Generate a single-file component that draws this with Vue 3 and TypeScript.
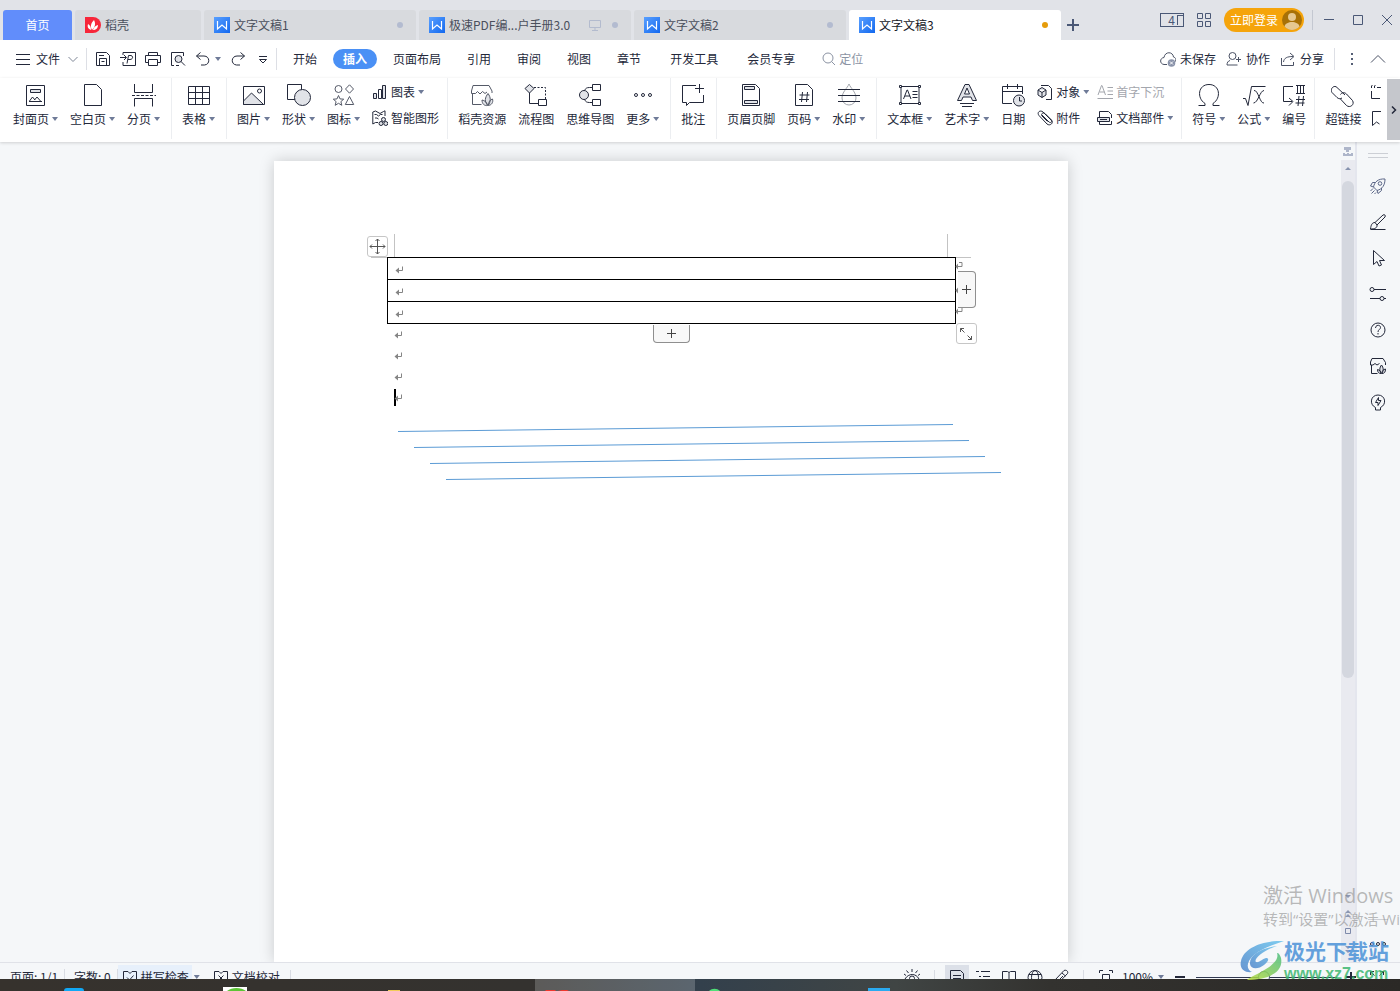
<script setup lang="ts">
import { ref } from 'vue'

interface Tab { label: string; icon: 'none' | 'docer' | 'writer'; dot?: boolean; shared?: boolean; kind?: string }
interface Tool { label: string; icon: string; arrow?: boolean; disabled?: boolean }
interface Group { tools: Tool[]; columns?: Tool[][]; tight?: boolean }

const tabs: Tab[] = [
  { label: '首页', icon: 'none', kind: 'home' },
  { label: '稻壳', icon: 'docer', kind: 'docer' },
  { label: '文字文稿1', icon: 'writer', dot: true },
  { label: '极速PDF编...户手册3.0', icon: 'writer', dot: true, shared: true },
  { label: '文字文稿2', icon: 'writer', dot: true },
  { label: '文字文稿3', icon: 'writer', dot: true, kind: 'current' },
]

const menus = ['开始', '插入', '页面布局', '引用', '审阅', '视图', '章节', '开发工具', '会员专享']
const activeMenu = ref('插入')
const zoomLevel = ref(48)

const quick = ['save', 'pdf', 'print', 'preview']

const groups: Group[] = [
  { tools: [
    { label: '封面页', icon: 'cover', arrow: true },
    { label: '空白页', icon: 'blank', arrow: true },
    { label: '分页', icon: 'pageBreak', arrow: true },
  ] },
  { tools: [{ label: '表格', icon: 'table', arrow: true }] },
  { tight: true, tools: [
    { label: '图片', icon: 'picture', arrow: true },
    { label: '形状', icon: 'shape', arrow: true },
    { label: '图标', icon: 'iconSet', arrow: true },
  ], columns: [[
    { label: '图表', icon: 'chart', arrow: true },
    { label: '智能图形', icon: 'smart' },
  ]] },
  { tools: [
    { label: '稻壳资源', icon: 'shop' },
    { label: '流程图', icon: 'flow' },
    { label: '思维导图', icon: 'mind' },
    { label: '更多', icon: 'more', arrow: true },
  ] },
  { tools: [{ label: '批注', icon: 'comment' }] },
  { tools: [
    { label: '页眉页脚', icon: 'header' },
    { label: '页码', icon: 'pageNo', arrow: true },
    { label: '水印', icon: 'watermark', arrow: true },
  ] },
  { tight: true, tools: [
    { label: '文本框', icon: 'textBox', arrow: true },
    { label: '艺术字', icon: 'wordArt', arrow: true },
    { label: '日期', icon: 'date' },
  ], columns: [
    [
      { label: '对象', icon: 'object', arrow: true },
      { label: '附件', icon: 'clip' },
    ],
    [
      { label: '首字下沉', icon: 'dropCap', disabled: true },
      { label: '文档部件', icon: 'parts', arrow: true },
    ],
  ] },
  { tight: true, tools: [
    { label: '符号', icon: 'omega', arrow: true },
    { label: '公式', icon: 'formula', arrow: true },
    { label: '编号', icon: 'numbering' },
  ] },
  { tools: [{ label: '超链接', icon: 'link' }], columns: [[
    { label: '', icon: 'crossRef' },
    { label: '', icon: 'bookmark' },
  ]] },
]

const rail = ['rocket', 'brush', 'pointer', 'sliders', 'help', 'shopSmall', 'bulb']
const paragraphs = [1, 2, 3, 4]
const lines = [0, 16, 32, 48]

const g = 'fill="#e1e3e8"'
const icons: Record<string, string> = {
  cover: `<path d="M2.5 2.5h18v20h-18z"/><path ${g} d="M6.5 6.5h10v3h-10z"/><path d="M5.500 18l3-4 2.500 3M10.500 17l2.500-3 3.500 4M5 18.500h13"/>`,
  blank: `<path d="M3.500 1.500h12l5 5v16h-17z"/>`,
  pageBreak: `<path d="M2.500 1v8.500h18V1M2.500 23.500v-8h18v8"/><path d="M0 12.500h24" stroke-dasharray="3 1.500"/>`,
  table: `<path d="M1.500 3.500h21v18h-21zM1.500 9.500h21M1.500 15.500h21M8.500 9.500v12M15.500 3.500v18M8.500 3.500v6"/>`,
  picture: `<path d="M1.500 3.500h21v18h-21z"/><path ${g} d="M1.500 18l8-8 12 11.500h-20z"/><circle cx="17.500" cy="8" r="2"/>`,
  shape: `<path d="M.5 1.500h14v15H.5z"/><circle ${g} cx="15.500" cy="14.500" r="8"/>`,
  iconSet: `<g stroke="#555a68"><circle cx="6.500" cy="6" r="3.500"/><path d="M17.500 1.800l4 4.200-4 4.200-4-4.200zM6.500 12.500l1.500 3.400 3.700.3-2.800 2.400.9 3.700-3.300-2-3.300 2 .9-3.700-2.800-2.400 3.700-.3zM17.500 13.500l4.200 8h-8.400z"/></g>`,
  chart: `<path ${g} d="M1.500 9.500h3v5h-3z"/><path d="M6.500 5.500h3v9h-3z"/><path ${g} d="M10.500 1.500h3v13h-3z"/>`,
  smart: `<path d="M6 12.500H3.500L.8 14V2l2.700-1L8 3.500l3.500-2 1.500-.7V6M2.500 4.500h2l2 1.500 2-1.500h2M3 8h2l1.500 1"/><circle ${g} cx="11.500" cy="9.500" r="2"/><circle ${g} cx="9" cy="13.500" r="2"/><circle ${g} cx="13.800" cy="13.500" r="2"/>`,
  shop: `<g stroke="#555a68"><path d="M2.500 11v10.500h9M3 2.500h16l3 5.500v2M3 2.500L1.500 8v2.500h4l2-2 2.500 2.500 2.500-2.500 2.500 2 2-1.500"/><path ${g} d="M18 22.500c-4-4-3-8 0-12 3 4 3 8 0 12zM17.500 22.500c-3 .5-5.500-1.500-5.500-5.500 2.500.5 5 2 5.500 5.500zM18.500 22.500c0-3.500 1.500-6 4-6.500 1 3.500-1 6-4 6.500z"/></g>`,
  flow: `<path ${g} d="M5.500 1.500l4.500 4-4.500 4.500L1 5.500z"/><path d="M5.500 10v10.500h9M14.500 16.500h8v6h-8z"/><path d="M10 4.500h11.500v12" stroke-dasharray="2 1.500"/>`,
  mind: `<circle ${g} cx="6" cy="12" r="4.500"/><path d="M14.500 1.500h8v6h-8zM14.500 16.500h8v6h-8zM14.500 4.500h-3c-3 0-4 1-5 3M6.500 16.500c1 2 2 3 5 3h3"/>`,
  more: `<circle cx="5" cy="12" r="1.500"/><circle cx="12" cy="12" r="1.500"/><circle cx="19" cy="12" r="1.500"/>`,
  comment: `<path d="M15 2.500H1.500v17h4v3l3-3h14V12M18.500 1v9M14 5.500h9"/>`,
  header: `<path d="M3.500 1.500h13l4 4v17h-17z"/><path ${g} d="M5.500 3.500h10v3h-10zM5.500 17.500h13v3h-13z"/>`,
  pageNo: `<path d="M3.500 1.500h12l5 5v16h-17z"/><path d="M10.500 9l-1 10M15.500 9l-1 10M7.500 12h10M7 16.500h10"/>`,
  watermark: `<path stroke="#a4a7ae" d="M12 1c-1.500 4-7 8-7 14a7 7 0 0 0 14 0c0-6-5.500-10-7-14z"/><path d="M1 6.500h22M1 12.500h22M1 18.500h22"/>`,
  textBox: `<path d="M3 3.500h18v17H3z"/><path fill="#fff" d="M1.500 2.500h2v2h-2zM20.500 2.500h2v2h-2zM1.500 19.500h2v2h-2zM20.500 19.500h2v2h-2z"/><path d="M5.500 16l3.500-9h.5l3.500 9M7 13h5M14.500 8.500h5M14.500 11.500h5M14.500 14.500h5"/>`,
  wordArt: `<path ${g} d="M2.500 17.500l7.500-16h4l7.500 16h-4l-1.500-3.500H8l-1.500 3.500z"/><path fill="#fff" d="M9.500 11L12 5l2.500 6z"/><path d="M5 20.500h14M7 23.500h10"/>`,
  date: `<path d="M11 20.500H1.500v-17h20V11M1.500 8.500h20M6.500 1v5M16.500 1v5"/><circle ${g} cx="18" cy="17.500" r="5.500"/><path d="M18.500 14v4H21"/>`,
  object: `<path d="M4 1.500h7.500l3 3v11H9"/><path ${g} d="M5 3.500L9 6v5l-4 2.500L1 11V6zM1 6l4 2.500L9 6M5 8.500v5"/>`,
  clip: `<path d="M5 5l7 7c2 1.500 3.500-.5 2-2L6 2C3-.5-.5 2.500 2 5.500l8 8.500c3 2.500 7-1 4.500-4L8 3.500C6 2 3.500 4 5 6l5.500 5.500"/>`,
  dropCap: `<path d="M1 11L4.500 1.500h.5L8.500 11M2.500 8h5M10.500 3.500H16M10.500 7H16M10.500 10.500H16M.5 14.500H16"/>`,
  parts: `<path d="M2.500 8V1.500h9l3 3V8M2.500 11v3.500h12V11"/><path ${g} d="M.5 7.500h12v4H.5z"/><path d="M3 9.500h7"/>`,
  omega: `<path d="M1.500 22.500H8v-2C-.5 15 1 1.500 12 1.500S24.500 15 16 20.500v2h6.500"/>`,
  formula: `<path d="M1 15.500h2.500l2.500 7L9.500 3.500h14M12 7.500c4-1 6 13.500 10 12.500M22 7.500c-4 0-6 12.500-10.500 12.500"/>`,
  numbering: `<path d="M11 3.500H1.500v15H10M7 15l4 3.500-4 4M14 2.500h9M14 10.500h9M15.500 2.500v8M18.500 2.500v8M21.500 2.500v8M17 13l-1 10M21.500 13l-1 10M14 16.500h9M13.500 20h9"/>`,
  link: `<path d="M14 12L6 4.500c-2.500-3-7.500 1-5 5l5 5c1.500 1.500 3.500 1.500 5 .5M9.500 11.500c1-2 4-2.500 6-.5l6 6.500c2.500 4-2.500 8-6 5L9 15.500"/>`,
  crossRef: `<path d="M1.500 7v7.500H10M7 3.500h4M1.500 4V2l1-1M4.500 4V2l1-1"/>`,
  bookmark: `<path d="M11 1.500H2.500v14l4-3.500 3 2"/>`,
  save: `<path d="M1.500 1.500h10l3 3v10h-13zM4.500 14.500v-7h7v7M4 4.500h5M6.500 10.500h3"/>`,
  pdf: `<path d="M3 4V1.500h12.500v13H3V11M0 6.500h6M4 4l2.500 2.500L4 9M7 12.500l1.500-8H11c2.500.5 2 4-1 4H8"/>`,
  print: `<path d="M3.500 4.500v-3h9v3M3.500 11.500h-3v-7h15v7h-3M3.500 8.500h9v6h-9z"/>`,
  preview: `<path d="M4 14.500H1.500v-13h12V5"/><circle ${g} cx="8.500" cy="8" r="3.500"/><path d="M11 10.500l4 4M6 14.500h3"/>`,
  undo: `<path d="M5.500 1.500L1.500 5l4 3.500M1.500 5H9c6 0 6.500 8.500.5 9H6"/>`,
  redo: `<path d="M10.500 1.500l4 3.500-4 3.500M14.500 5H7C1 5 .5 13.500 6.500 14H10"/>`,
  custom: `<path d="M4 5.500h8M4.500 8.500l3.500 3.500 3.500-3.500z"/>`,
  cloud: `<path d="M7 13.500H4C-.5 13-.5 7 4 6.500c1-6.500 9-6 9.500-.5 2 .5 3 2 2 4.500"/><circle cx="11.500" cy="12" r="3.800" fill="#8a93aa" stroke="none"/><path stroke="#fff" d="M10 10.500l3 3M13 10.500l-3 3"/>`,
  invite: `<circle cx="6.500" cy="5" r="3.500"/><path d="M4 9.500c-2 .5-3 2-3 4.500h10.500M10 8.500h5M12.500 6v5"/>`,
  share: `<path d="M1.500 7v7.500h12V11M3.500 11C4 7 7 5.500 13 5.500M10 2l4 3.500L10 9"/>`,
  rocket: `<g stroke="#5b6687"><path d="M7.500 13c1-5 4.500-8.500 11.500-8 0 6-2.500 10-8 11.500z"/><circle cx="14" cy="9.500" r="1.800"/><path d="M9 8.500H6.500L4.500 12l3 1M15.500 14v2.500L12 19.500l-1-3M7 14.500L4.500 17M8.500 16.500l-3 3M10 18.500L8.500 20"/></g>`,
  brush: `<path d="M4.500 19.500h15M9 12.500L17 5c1.500-1 3 .5 2 2l-8 8M9 12.500c-3 0-4 2.500-4.500 6.500 4 0 7-1 6.500-4z"/>`,
  pointer: `<path d="M7.500 4.500v14l3.500-3 2 4.500 2.500-1-2-4.500h5z"/>`,
  sliders: `<path d="M8 7.500h12M4 16.500h10M18 16.500h2"/><circle cx="6" cy="7.500" r="2"/><circle cx="16" cy="16.500" r="2"/>`,
  help: `<circle cx="12" cy="12" r="7"/><path d="M9.500 10c0-3.500 5-3.500 5-.5 0 2-2.500 2-2.500 4.500M12 15v1.500"/>`,
  shopSmall: `<path d="M5.500 11v8.500h6M6 4.500h11l2.500 4V11M6 4.500L4.500 8v3H7l2-1.500 2 1.500 2.500-1.500"/><path ${g} d="M15.500 19.500c-2.500-2.500-2-6 0-8.500 2 2.500 2.500 6 0 8.500zM15 19.500c-2 0-3.500-1-3.500-4 2 .5 3.500 1.500 3.500 4zM16 19.500c0-2.500 1-4 3.500-4.500 0 3-1 4.500-3.500 4.500z"/>`,
  bulb: `<path d="M9.500 17.500C3 14.500 4.500 5 12 5s9 9.500 2.500 12.500V20h-5zM12.500 7.500l-3 5h2.500v3l3-5h-2.500z"/>`,
  spell: `<path d="M6 2.500H1.500v12h13v-12H10M6 2.500l2 2 2-2M5 8.500l2.500 2.500 4-4.500"/>`,
  proof: `<path d="M6 2.500H1.500v12h13v-12H10M6 2.500l2 2 2-2M5.500 6.500l5 5M10.500 6.500l-5 5"/>`,
  eye: `<path d="M1 10c3.500-6 11-6 14 0M8 0v3M2.500 1.500l2 2.500M13.500 1.500l-2 2.500M0 5l2 1.500M16 5l-2 1.500"/><circle cx="8" cy="9.500" r="2.500"/>`,
  pageView: `<path d="M1.500 1.500h10l3 3v12h-13zM4 6.500h8M4 9.500h8"/>`,
  outline: `<path d="M1 2.500h3M6 2.500h9M4 7.500h2M8 7.500h7M4 12.500h2M8 12.500h7"/>`,
  book: `<path d="M1.500 2.500h5l1.500 1 1.500-1h5v12h-5l-1.500 1-1.500-1h-5zM8 3.500v12"/>`,
  globe: `<circle cx="8" cy="8.500" r="7"/><ellipse cx="8" cy="8.500" rx="3.500" ry="7"/><path d="M2 5.500h12M1 10.500h14"/>`,
  pen: `<path d="M2 11L11 1.500c2.500-1 4.500 1 3.500 3L5.500 14 2 15zM9 4l3.500 3M5 12l5-5"/>`,
  fit: `<path d="M1.500 4V1.500H5M11 1.500h3.500V4M4.500 5.500h7v8h-7z"/>`,
  full: `<path d="M1.500 6V2.500H5M1.500 2.500l4 4M11 2.500h3.500V6M14.500 2.500l-4 4"/>`,
}
</script>

<template>
  <div class="app">
    <header class="titlebar">
      <nav class="tabs">
        <button v-for="t in tabs" :key="t.label" class="tab" :class="t.kind">
          <svg v-if="t.icon === 'docer'" class="badge" viewBox="0 0 16 16">
            <path fill="#f7263a" d="M0 0h8a8 8 0 0 1 0 16H0z" />
            <path fill="#fff" d="M7 13C5 9 6 6 9 3c2 4 1 7-2 10zM6 13C3 12 2 10 3 7c2 1 3 3 3 6zM8 13c1-3 2-4 5-5 0 3-2 5-5 5z" />
          </svg>
          <svg v-if="t.icon === 'writer'" class="badge" viewBox="0 0 16 16">
            <defs><linearGradient id="wr" x1="0" y1="0" x2="1" y2="1"><stop offset="0" stop-color="#5aa0ff" /><stop offset="1" stop-color="#1268ef" /></linearGradient></defs>
            <path fill="url(#wr)" d="M0 0h16v16H0z" />
            <path fill="none" stroke="#fff" stroke-width="1.200" d="M3.500 4v8L8 8l4.500 4V4" />
          </svg>
          <span class="tab-label">{{ t.label }}</span>
          <svg v-if="t.shared" class="shared" viewBox="0 0 12 12"><path d="M.5 1.500h11v7H.5zM6 8.500v3M3 11.500h6" /></svg>
          <i v-if="t.dot" class="dot"></i>
        </button>
      </nav>
      <button class="add" aria-label="新建"><svg viewBox="0 0 12 12"><path d="M6 0v12M0 6h12" /></svg></button>
      <div class="window">
        <button class="wbtn layout" aria-label="布局"><span>4</span><i></i></button>
        <button class="wbtn" aria-label="应用"><svg class="s14" viewBox="0 0 14 14"><path d="M.5.500h5v5h-5zM8.500.500h5v5h-5zM.5 8.500h5v5h-5zM8.500 8.500h5v5h-5z" /></svg></button>
        <button class="login">立即登录
          <svg viewBox="0 0 20 20"><circle cx="10" cy="10" r="10" fill="#a87107" /><circle cx="10" cy="7" r="4" fill="#e6c891" /><path fill="#e6c891" d="M2.500 16.500c1-6 14-6 15 0a10 10 0 0 1-15 0z" /></svg>
        </button>
        <i class="wsep"></i>
        <button class="wbtn ctl" aria-label="最小化"><svg class="s12" viewBox="0 0 12 12"><path d="M1 5.500h10" /></svg></button>
        <button class="wbtn ctl" aria-label="最大化"><svg class="s12" viewBox="0 0 12 12"><path d="M1.500 1.500h9v9h-9z" /></svg></button>
        <button class="wbtn ctl" aria-label="关闭"><svg class="s12" viewBox="0 0 12 12"><path d="M1 1l10 10M11 1L1 11" /></svg></button>
      </div>
    </header>

    <div class="menubar">
      <button class="file"><svg class="s16" viewBox="0 0 16 16"><path d="M1 3.500h14M1 8.500h14M1 13.500h14" /></svg>文件</button>
      <button class="chev" aria-label="文件菜单"><svg viewBox="0 0 10 10"><path d="M.5 3L5 7.500 9.500 3" /></svg></button>
      <i class="msep"></i>
      <div class="quick">
        <button v-for="q in quick" :key="q" :aria-label="q"><svg class="s16" viewBox="0 0 16 16" v-html="icons[q]" /></button>
        <div class="undo">
          <button aria-label="撤销"><svg class="s16" viewBox="0 0 16 16" v-html="icons.undo" /></button>
          <i class="arrow"></i>
        </div>
        <button aria-label="恢复"><svg class="s16" viewBox="0 0 16 16" v-html="icons.redo" /></button>
        <button aria-label="自定义"><svg class="s16" viewBox="0 0 16 16" v-html="icons.custom" /></button>
      </div>
      <i class="msep near"></i>
      <nav class="menus">
        <button v-for="m in menus" :key="m" :class="{ active: m === activeMenu, wide: m === '开发工具' || m === '会员专享' }" @click="activeMenu = m">{{ m }}</button>
      </nav>
      <label class="search">
        <svg viewBox="0 0 14 14"><circle cx="6" cy="6" r="5" /><path d="M9.500 9.500L13 13" /></svg>
        <input type="text" placeholder="定位" aria-label="定位" />
      </label>
      <div class="account">
        <button><svg class="s16" viewBox="0 0 16 16" v-html="icons.cloud" />未保存</button>
        <button><svg class="s16" viewBox="0 0 16 16" v-html="icons.invite" />协作</button>
        <button><svg class="s16" viewBox="0 0 16 16" v-html="icons.share" />分享</button>
        <i class="msep"></i>
        <button class="dots" aria-label="更多选项"><svg viewBox="0 0 4 14"><path fill="#555e75" stroke="none" d="M1 1h2v2H1zM1 6h2v2H1zM1 11h2v2H1z" /></svg></button>
        <button class="fold" aria-label="折叠功能区"><svg viewBox="0 0 16 10"><path d="M1 8.500l7-7 7 7" /></svg></button>
      </div>
    </div>

    <div class="ribbon">
      <div class="groups">
        <section v-for="(gr, i) in groups" :key="i" class="group" :class="{ tight: gr.tight }">
          <button v-for="t in gr.tools" :key="t.label" class="tool">
            <svg class="s24" viewBox="0 0 24 24" v-html="icons[t.icon]" />
            <span class="cap">{{ t.label }}<i v-if="t.arrow" class="arrow"></i></span>
          </button>
          <div v-for="(c, j) in gr.columns" :key="j" class="stack">
            <button v-for="t in c" :key="t.icon" class="mini" :disabled="t.disabled" :aria-label="t.label || t.icon">
              <svg class="s16" viewBox="0 0 16 16" v-html="icons[t.icon]" />
              <span v-if="t.label" class="cap">{{ t.label }}<i v-if="t.arrow" class="arrow"></i></span>
            </button>
          </div>
        </section>
      </div>
      <button class="next" aria-label="向右滚动"><svg viewBox="0 0 6 8"><path d="M1 .5L4.500 4 1 7.500" /></svg></button>
    </div>

    <main class="work">
      <div class="canvas">
        <article class="page">
          <i class="corner left"></i><i class="corner right"></i><i class="edge"></i>
          <div class="tablewrap">
            <table>
              <tbody>
                <tr v-for="r in 3" :key="r"><td><svg class="mark" viewBox="0 0 8 8"><path d="M7.500.500v4H2" /><path class="tip" d="M4 1.500v6L.5 4.500z" /></svg></td></tr>
              </tbody>
            </table>
            <svg v-for="r in 3" :key="r" class="mark rowend" :class="'r' + r" viewBox="0 0 8 8"><path d="M4 .5h3v4H2" /><path class="tip" d="M3 1.500v6L.5 4.500z" /></svg>
            <button class="move" aria-label="移动表格"><svg viewBox="0 0 17 17"><path d="M8.500 1v15M1 8.500h15M6.500 3l2-2 2 2M6.500 14l2 2 2-2M3 6.500l-2 2 2 2M14 6.500l2 2-2 2" /></svg></button>
            <button class="addcol" aria-label="添加列"><svg viewBox="0 0 10 10"><path d="M5.500 1v9M1 5.500h9" /></svg></button>
            <button class="addrow" aria-label="添加行"><svg viewBox="0 0 10 10"><path d="M5.500 1v9M1 5.500h9" /></svg></button>
            <button class="resize" aria-label="调整大小"><svg viewBox="0 0 14 14"><path d="M1.500 5V1.500H5M1.500 1.500L5.500 5.500M12.500 9v3.500H9M12.500 12.500L8.500 8.500" /></svg></button>
          </div>
          <p v-for="p in paragraphs" :key="p" :class="{ caret: p === 4 }"><svg class="mark" viewBox="0 0 8 8"><path d="M7.500.500v4H2" /><path class="tip" d="M4 1.500v6L.5 4.500z" /></svg></p>
          <svg class="lines" viewBox="0 0 604 56">
            <path v-for="d in lines" :key="d" :d="`M${d} ${d + 7.500}L${d + 555} ${d + .5}`" />
          </svg>
        </article>
      </div>
      <div class="scroll">
        <svg class="ruler" viewBox="0 0 10 10"><path fill="#aeb6ca" d="M1 0h7v3H6v2H3V3H1zM0 6h2v1h2V6h2v1h2V6h2v3H0z" /></svg>
        <div class="track">
          <i class="tri up"></i>
          <div class="thumb"></div>
          <svg class="nav" viewBox="0 0 8 60"><path fill="#8d98b3" d="M1 1h6L4 4zM4 16l3 3H1zM4 20l3 3H1zM1 52h6L4 55zM1 56h6L4 59z" /><path fill="none" stroke="#7f8bab" d="M1.500 34.500h5v5h-5z" /></svg>
        </div>
      </div>
      <aside class="rail">
        <i class="grip"></i>
        <button v-for="r in rail" :key="r" :aria-label="r"><svg class="s24" viewBox="0 0 24 24" v-html="icons[r]" /></button>
        <i class="railsep"></i>
        <button aria-label="更多"><svg class="s24" viewBox="0 0 24 24"><circle cx="6" cy="12" r="1.500" /><circle cx="12" cy="12" r="1.500" /><circle cx="18" cy="12" r="1.500" /></svg></button>
      </aside>
    </main>

    <footer class="status">
      <div class="statusrow">
        <span class="stext first">页面: 1/1</span>
        <span class="stext">字数: 0</span>
        <button class="check on"><svg class="s16" viewBox="0 0 16 16" v-html="icons.spell" />拼写检查</button>
        <i class="arrow sa"></i>
        <button class="check"><svg class="s16" viewBox="0 0 16 16" v-html="icons.proof" />文档校对</button>
        <i class="ssep"></i>
        <div class="views">
          <button aria-label="护眼模式"><svg class="s16" viewBox="0 0 16 16" v-html="icons.eye" /></button>
          <i class="ssep"></i>
          <button class="sel" aria-label="页面视图"><svg class="s16" viewBox="0 0 16 16" v-html="icons.pageView" /></button>
          <button v-for="v in ['outline', 'book', 'globe', 'pen']" :key="v" :aria-label="v"><svg class="s16" viewBox="0 0 16 16" v-html="icons[v]" /></button>
          <i class="ssep"></i>
          <button aria-label="适合"><svg class="s16" viewBox="0 0 16 16" v-html="icons.fit" /></button>
          <button class="pct">100%<i class="arrow"></i></button>
          <button aria-label="缩小"><svg class="s12 bold" viewBox="0 0 12 12"><path d="M1 6h10" /></svg></button>
          <input v-model="zoomLevel" class="range" type="range" min="0" max="100" aria-label="显示比例" />
          <button class="plus" aria-label="放大"><svg class="s12 bold" viewBox="0 0 12 12"><path d="M1 6h10M6 1v10" /></svg></button>
          <button aria-label="全屏"><svg class="s16" viewBox="0 0 16 16" v-html="icons.full" /></button>
        </div>
      </div>
    </footer>
    <div class="taskbar">
      <svg viewBox="0 0 1400 12" preserveAspectRatio="xMinYMin slice">
        <path fill="#fff" opacity=".2" d="M535 0h160v12H535z" />
        <path fill="#11a8f5" d="M64 12c0-2 1-3 3-3h14c2 0 3 1 3 3z" />
        <path fill="#fff" d="M223 8h24v4h-24z" /><path fill="#5cc435" d="M227 12c5-4 14-4 19 0z" />
        <path fill="#f2cc59" d="M388 11h12v1h-12z" />
        <path fill="#f0372c" d="M546 11h9l1 1h-11zM562 11h5l2 1h-11z" />
        <path fill="#50df78" d="M709 12c3-3 8-3 11 0z" />
        <path fill="#2aaaf0" d="M868 9h22v3h-22z" />
      </svg>
    </div>

    <div class="activate"><strong>激活 Windows</strong><span>转到“设置”以激活 Windows</span></div>
    <div class="site">
      <svg viewBox="0 0 44 40">
        <defs>
          <linearGradient id="sb" x1="1" y1="0" x2="0" y2="1"><stop offset="0" stop-color="#69c4ee" /><stop offset="1" stop-color="#4f86cb" /></linearGradient>
          <linearGradient id="sg" x1="1" y1="0" x2="0" y2="1"><stop offset="0" stop-color="#49bd80" /><stop offset="1" stop-color="#b8da3c" /></linearGradient>
        </defs>
        <path fill="url(#sb)" d="M44 0C25-1 4 6 1 20c-2 8 4 12 11 11-6-3-6-10 2-17C22 7 33 4 44 0z" />
        <path fill="url(#sb)" d="M37 5C22 7 9 14 10 23c1 6 9 5 14 1 4-3 6-7 2-7-4 1-7 5-10 4-3-3 8-12 21-16z" />
        <path fill="url(#sg)" d="M37 12c2 6-3 11-11 16-8 5-16 8-19 11 20 0 37-7 34-22-1-3-2-5-4-5z" />
      </svg>
      <div><b>极光下载站</b><em>www.xz7.com</em></div>
    </div>
  </div>
</template>

<style>
html, body { margin: 0; overflow: hidden; }
</style>

<style scoped>
.app {
  position: relative; display: flex; flex-direction: column; height: 100vh; overflow: hidden;
  font: 12px/16px "Noto Sans CJK SC", sans-serif; color: #23283a; background: #f5f7f9;
}
button { font: inherit; color: inherit; background: none; border: 0; padding: 0; margin: 0; white-space: nowrap; flex: none; }
svg { display: block; flex: none; fill: none; stroke: currentColor; }
i { display: block; flex: none; }
.s24 { width: 24px; height: 24px; }
.s16 { width: 16px; height: 16px; }
.s14 { width: 14px; height: 14px; }
.s12 { width: 12px; height: 12px; }
.bold { stroke-width: 2; }
.arrow { width: 6px; height: 4px; background: #6f7b98; clip-path: polygon(0 0, 100% 0, 50% 100%); }

.titlebar { display: flex; flex: none; height: 40px; background: #e1e3e8; }
.tabs { display: flex; gap: 3px; padding: 10px 0 0 3px; }
.tab {
  display: flex; align-items: center; gap: 4px; width: 212px; height: 30px; box-sizing: border-box;
  padding: 0 13px 0 10px; background: #d8dade; border-radius: 3px 3px 0 0; color: #4a4f5c;
}
.tab.home { width: 69px; padding: 0; justify-content: center; background: #618dfb; color: #fff; }
.tab.docer { width: 126px; }
.tab.current { background: #fff; color: #16181f; }
.badge { width: 16px; height: 16px; stroke: none; }
.shared { width: 12px; height: 12px; margin-left: auto; margin-right: 7px; color: #b3bbce; }
.dot { width: 6px; height: 6px; border-radius: 3px; background: #b3bbd0; margin-left: auto; }
.shared + .dot { margin-left: 0; }
.current .dot { background: #e59c0b; }
.add { padding: 10px 6px 0; color: #4a5876; }
.add svg { width: 12px; height: 12px; stroke-width: 2; }
.window { display: flex; align-items: center; margin-left: auto; padding-right: 7px; color: #4a5876; }
.layout { display: flex; align-items: center; justify-content: flex-end; width: 24px; height: 14px; box-sizing: border-box; border: 1px solid #4a5876; margin-right: 13px; line-height: 12px; gap: 2px; }
.layout i { width: 6px; height: 10px; box-sizing: border-box; border: 1px solid #4a5876; border-width: 1px 0 0 1px; }
.login { display: flex; align-items: center; gap: 4px; height: 24px; margin: 0 8px 0 13px; padding: 0 2px 0 6px; background: #f5a40b; border-radius: 12px; color: #fff; }
.login svg { width: 20px; height: 20px; stroke: none; }
.wsep { width: 1px; height: 20px; background: #c4c8d1; }
.ctl { margin-left: 17px; }
.wsep + .ctl { margin-left: 10px; }

.menubar { display: flex; align-items: center; flex: none; height: 38px; padding: 0 14px 0 15px; background: #fff; }
.file { display: flex; align-items: center; gap: 5px; }
.chev { margin: 0 8px; color: #7f8696; }
.chev svg { width: 10px; height: 10px; }
.msep { width: 1px; height: 22px; background: #dddfe5; }
.near { margin-left: 5px; }
.quick { display: flex; align-items: center; gap: 9px; margin-left: 8px; }
.undo { display: flex; align-items: center; gap: 4px; }
.menus { display: flex; gap: 6px; margin-left: 6px; }
.menus button { height: 20px; padding: 0 10px; border-radius: 10px; }
.menus .wide { margin-left: 3px; }
.menus .active { background: #4a90f5; color: #fff; font-weight: 700; }
.search { display: flex; align-items: center; gap: 3px; margin-left: 17px; color: #8b93a3; }
.search svg { width: 14px; height: 14px; }
.search input { width: 40px; padding: 0; border: 0; outline: 0; background: none; font: inherit; }
.search input::placeholder { color: #8b93a3; opacity: 1; }
.account { display: flex; align-items: center; margin-left: auto; }
.account button { display: flex; align-items: center; gap: 4px; margin-right: 10px; }
.account button svg { color: #4b5265; }
.account .dots { margin: 0 16px 0 15px; }
.dots svg { width: 4px; height: 14px; }
.account .fold { margin: 0; }
.fold svg { width: 16px; height: 10px; }

.ribbon { position: relative; z-index: 2; display: flex; flex: none; height: 64px; background: #fff; box-shadow: 0 1px 3px rgba(0, 0, 0, .16); }
.groups { display: flex; flex: 1; min-width: 0; overflow: hidden; padding-left: 3px; }
.group { display: flex; flex: none; gap: 12px; height: 61px; padding: 0 11px 0 10px; border-right: 1px solid #eceef1; }
.group.tight { padding-right: 8px; }
.group:last-child { gap: 9px; border: 0; }
.tool { display: flex; flex-direction: column; align-items: center; gap: 4px; padding-top: 5px; height: 61px; }
.cap { display: flex; align-items: center; gap: 3px; }
.stack { display: flex; flex-direction: column; padding-top: 1px; }
.stack + .stack { margin-left: -4px; }
.mini { display: flex; align-items: center; gap: 3px; height: 26px; }
.mini:disabled { color: #a3a6ad; }
.next { width: 13px; height: 61px; margin-top: 1px; background: #c5c7cc; display: flex; align-items: center; justify-content: center; }
.next svg { width: 6px; height: 8px; stroke-width: 1.5; }

.work { display: flex; flex: 1; min-height: 0; }
.canvas { flex: 1; min-width: 0; display: flex; justify-content: center; padding-top: 19px; overflow: hidden; }
.page { position: relative; flex: none; width: 794px; box-sizing: border-box; padding: 96px 112px 0 113px; background: #fff; box-shadow: 0 0 14px rgba(0, 0, 0, .18); }
.corner { position: absolute; top: 73px; width: 1px; height: 23px; background: #c3c3c3; }
.corner.left { left: 120px; }
.corner.right { right: 120px; }
.edge { position: absolute; left: 97px; right: 97px; top: 96px; height: 1px; background: #c3c3c3; }
.tablewrap { position: relative; }
table { width: 100%; border-collapse: collapse; }
td { height: 21px; padding: 0 0 0 7px; border: 1px solid #000; line-height: 21px; }
.mark { width: 8px; height: 8px; color: #858585; }
.tip { fill: #858585; stroke: none; }
td .mark { margin-top: 2px; }
.rowend { position: absolute; left: 568px; top: 5px; }
.rowend.r2 { top: 29px; }
.rowend.r3 { top: 50px; }
.move, .resize { position: absolute; width: 21px; height: 21px; display: flex; align-items: center; justify-content: center; background: #fff; border: 1px solid #c6c6c6; border-radius: 3px; color: #555; }
.move { left: -20px; top: -21px; }
.move svg { width: 17px; height: 17px; }
.resize { left: 569px; top: 66px; }
.resize svg { width: 14px; height: 14px; }
.addcol, .addrow { position: absolute; display: flex; align-items: center; justify-content: center; background: #f8f8f8; border: 1px solid #8f8f8f; color: #444; }
.addcol svg, .addrow svg { width: 10px; height: 10px; }
.addcol { left: 571px; top: 14px; width: 18px; height: 37px; padding-bottom: 1px; border-left: 0; border-radius: 0 4px 4px 0; }
.addrow { left: 266px; top: 68px; width: 37px; height: 18px; padding-bottom: 1px; border-top: 0; border-radius: 0 0 4px 4px; }
p { display: flex; align-items: center; height: 21px; margin: 0; padding-left: 7px; }
p.caret { background: linear-gradient(#000, #000) 7px 2px / 2px 17px no-repeat; }
.lines { position: absolute; left: 124px; top: 263px; width: 604px; height: 56px; stroke: #5b9bd5; }
.scroll { display: flex; flex-direction: column; align-items: center; width: 14px; border-right: 2px solid #e4e6ee; }
.ruler { width: 10px; height: 10px; margin: 5px 0 3px; stroke: none; }
.track { position: relative; display: flex; flex-direction: column; align-items: center; flex: 1; width: 100%; background: #e9eaf0; }
.tri { margin: 7px 0 11px; width: 6px; height: 3px; background: #8692ae; clip-path: polygon(50% 0, 100% 100%, 0 100%); }
.thumb { width: 12px; height: 62%; border-radius: 6px; background: #d4d7df; }
.nav { width: 8px; height: 60px; margin-top: auto; margin-bottom: 8px; stroke: none; }
.rail { display: flex; flex-direction: column; align-items: center; gap: 12px; width: 43px; box-sizing: border-box; padding: 0 1px 6px 0; }
.grip { width: 20px; height: 3px; margin: 11px 0 4px; border: 1px solid #cccfd5; border-width: 1px 0; }
.railsep { width: 20px; height: 1px; margin-top: auto; background: #cccfd5; }

.status { flex: none; height: 16px; overflow: hidden; border-top: 1px solid #e0e2e8; background: #f5f7f9; }
.statusrow { display: flex; align-items: center; height: 28px; padding-right: 11px; }
.stext { padding: 0 6px 0 9px; border-right: 1px solid #d9dce3; }
.first { padding-left: 10px; }
.check { display: flex; align-items: center; gap: 3px; height: 24px; padding: 0 3px 0 4px; }
.on { background: #e7f0fb; }
.sa { margin: 0 9px 0 2px; }
.ssep { width: 1px; height: 14px; background: #d9dce3; }
.check + .ssep { margin-left: 7px; }
.views { display: flex; align-items: center; gap: 2px; margin-left: auto; }
.views button { display: flex; align-items: center; justify-content: center; width: 24px; height: 24px; }
.views .ssep { margin: 0 8px; }
.views .sel { background: #dce0e8; }
.views .pct { width: 46px; gap: 5px; }
.views .plus { margin-left: -2px; }
.range { appearance: none; width: 141px; height: 12px; margin: 0 2px; background: linear-gradient(#2f3850, #2f3850) center / 100% 1px no-repeat; }
.range::-webkit-slider-thumb { appearance: none; width: 12px; height: 12px; box-sizing: border-box; border: 1px solid #4a5876; border-radius: 6px; background: #f5f7f9; }

.taskbar { flex: none; height: 12px; overflow: hidden; background: linear-gradient(90deg, #36322d 0, #34322f 38%, #33404c 50%, #404544 64%, #33322f 75%, #2b2926 100%); }
.taskbar svg { width: 100%; height: 12px; stroke: none; }

.activate { position: absolute; left: calc(100% - 137px); right: 0; bottom: 62px; z-index: 3; overflow: hidden; white-space: nowrap; color: rgba(130, 130, 130, .55); font-family: "Open Sans", "Noto Sans CJK SC", sans-serif; pointer-events: none; }
.activate strong { display: block; font-size: 20px; line-height: 26px; font-weight: 400; }
.activate span { display: block; font-size: 15px; line-height: 20px; }
.site { position: absolute; right: 11px; bottom: 8px; z-index: 3; display: flex; align-items: center; opacity: .85; pointer-events: none; }
.site svg { width: 44px; height: 40px; stroke: none; }
.site b { display: block; font-size: 21px; line-height: 22px; color: #4b92d8; }
.site em { display: block; margin-top: 4px; font: 700 16px/18px "Liberation Sans", sans-serif; color: #3fb871; }
</style>
